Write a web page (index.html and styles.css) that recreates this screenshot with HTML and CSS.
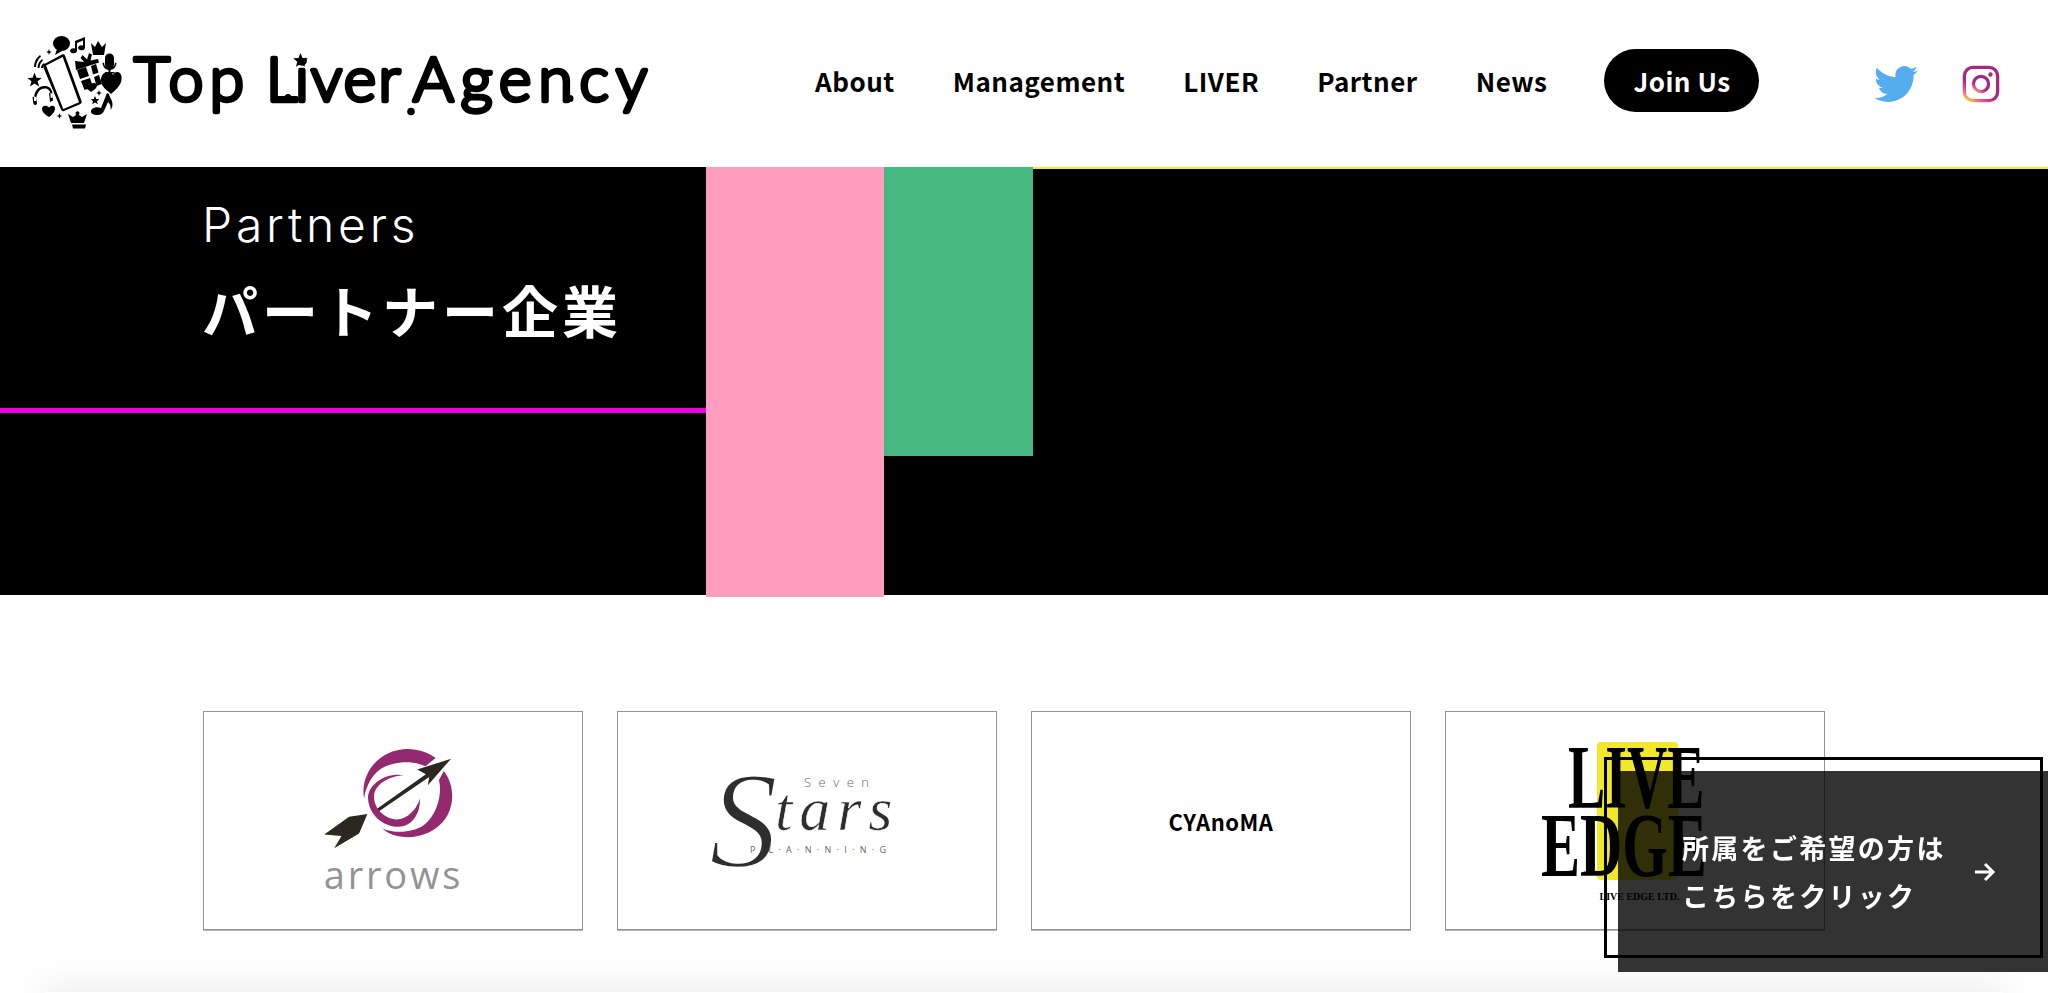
FILE: index.html
```html
<!DOCTYPE html>
<html lang="ja">
<head>
<meta charset="utf-8">
<title>Top Liver Agency - Partners</title>
<link rel="stylesheet" href="styles.css">
</head>
<body>
<header class="site-header">
  <a class="logo" href="#">
    <svg class="logo-mark" viewBox="0 0 110 110" aria-hidden="true">
      <g fill="#000">
        <ellipse cx="41.500" cy="18.500" rx="8.500" ry="7.500"/><path d="M37 24l-2 6 7-4z"/>
        <path d="M57 26a3.500 2.500 0 1 1-2-2.500V16l10-4v11a3.500 2.500 0 1 1-2-2.500v-5l-6 2.500z"/>
        <path d="M71 18l4 4 3-6 4 6 4-4-2 12H73z"/>
        <path d="M14 42c0-5 2-9 6-12l1 1.500c-3 3-5 6-5 10.500zM17.500 43c0-4 2-7 4.500-9l1 1.500c-2 2-3.500 4-3.500 7.500zM21 43c0-2 1-4 3-5l1 1.500c-1.500 1-2 2-2 3.500z"/>
        <path d="M29 24l.8 2.200 2.200.8-2.200.8-.8 2.200-.8-2.200-2.200-.8 2.200-.8z"/>
        <path d="M14.500 47.500l2 5.300 5.300.2-4.200 3.200 1.500 5.300-4.600-3.100-4.500 3.100 1.500-5.300-4.200-3.200 5.300-.2z"/>
        <path fill-rule="evenodd" d="M23.500 39.500L42 29.500c1.500-.7 2.500-.2 3 1L61.500 76c.5 1.500 0 2.500-1.500 3.200L44 86c-1.500.5-2.500 0-3-1.500L23 41.500c-.2-.8 0-1.500.5-2zM26 40.500L43.300 84 59 77.300 42.700 32z"/>
        <path d="M55 36l9 1-3.500-4 2-3 4.500 4.500 2-6.500 3 1.500-1.500 6 7.500-1.500 1 3.500-23 7.500zM57 45l9-3 3 9-9 3zM71 41l5-2 2.500 8.500-5.500 2zM61 56l9-3 3 9-8.500 3zM74 52l5-2 3 9-5.500 2z"/>
        <path d="M85 33a4.500 4.500 0 0 1 9 0v6a4.500 4.500 0 0 1-9 0zM82.500 38l1.500-.5a5.500 5.500 0 0 0 11 0l1.500.5a7 7 0 0 1-6 7v2h4v1.500h-9.500V47h3.500v-2a7 7 0 0 1-6-7z"/>
        <path d="M91 69c-4-4-10-7-10-14 0-5 3-8 7-8 3 0 4 1 5 3 1-2.500 3-3.500 5-3 3 1 4 4 3.500 8-1 6-6 10-10.500 14z"/>
        <path d="M71 67c-2-2-6-3.500-6-6.500 0-2.500 3.500-3.500 6-1 2-2.500 6-1.500 6 1 0 3-4 5-6 6.500z"/>
        <path d="M79 65l.8 2.200 2.200.8-2.200.8-.8 2.200-.8-2.200-2.200-.8 2.200-.8z"/>
        <path d="M75 71l1.300 3 3 .2-2.300 2 .8 3-2.800-1.700-2.800 1.700.8-3-2.300-2 3-.2z"/>
        <path fill-rule="evenodd" d="M14 76c-.7-10 5-16 12-15 5 .7 7 5 6.500 12l-2-.5c.5-5-1-8.500-5-9-5-.5-9.500 4-9.500 12.500zM12.500 72.500c1-1.500 3-1.500 3.500 0l1 6c0 1.500-2.500 2-3.500.5zM29 68l3.500.5.500 7-3 1.500z"/>
        <path d="M29 92c-3-2-7-4.500-7-8 0-3 4-4.500 7-1.500 2.500-3 6.500-1.500 6 1.500-.3 3.500-3 6-6 8z"/>
        <path d="M39.500 88l.7 2.300 2.300.7-2.300.7-.7 2.300-.7-2.300-2.300-.7 2.300-.7z"/>
        <path d="M51 98l-3-9 5 3 3-2-.5-2.500 2-1.500 2 1.500-.5 2.500 3 2 5-3-3 9zM52 99.500h14l-1 4H53z"/>
        <path d="M87 68l2 1c.5 3.500 3.500 6 3.500 10 0 2.500-.5 4-2 6 .5-3 0-6-2.500-8l-4 9c-1 2.500-4 4.500-8 4-3-.3-5.500-2-5-4 .5-3 5.500-5 10-3z"/>
      </g>
    </svg>
    <svg class="logo-word" viewBox="0 0 530 90" role="img" aria-label="Top Liver Agency">
      <text class="logo-text" y="61.500"><tspan x="4" textLength="110" lengthAdjust="spacing">Top</tspan> <tspan x="136">L</tspan><tspan x="165" textLength="104" lengthAdjust="spacing">iver</tspan> <tspan x="283" textLength="234" lengthAdjust="spacing">Agency</tspan></text>
      <circle class="logo-dot-cover" cx="170" cy="19" r="5.500"/>
      <path d="M170.500 14l2 4.900 5.300.4-4 3.400 1.200 5.100-4.500-2.800-4.500 2.800 1.200-5.100-4-3.400 5.300-.4z"/>
      <circle cx="158" cy="58.500" r="3.500"/>
      <circle cx="281" cy="72.500" r="3.800"/>
      <circle cx="440" cy="59.500" r="3.500"/>
    </svg>
  </a>
  <nav class="nav">
    <a href="#">About</a>
    <a href="#">Management</a>
    <a href="#">LIVER</a>
    <a href="#">Partner</a>
    <a href="#">News</a>
    <a class="join" href="#">Join Us</a>
  </nav>
  <div class="social">
    <svg class="twitter" viewBox="0 0 24 24" aria-hidden="true"><path fill="#55acee" d="M23.950 4.570a10 10 0 0 1-2.820.770 4.960 4.960 0 0 0 2.160-2.720c-.950.550-2 .960-3.130 1.180a4.920 4.920 0 0 0-8.380 4.480C7.690 8.100 4.070 6.130 1.640 3.160a4.820 4.820 0 0 0-.670 2.480c0 1.710.870 3.210 2.190 4.100a4.900 4.900 0 0 1-2.230-.620v.060a4.920 4.920 0 0 0 3.950 4.830 5 5 0 0 1-2.210.080 4.940 4.940 0 0 0 4.600 3.420A9.870 9.870 0 0 1 0 19.540a14 14 0 0 0 7.560 2.210c9.050 0 14-7.500 14-13.980 0-.210 0-.420-.020-.630a9.940 9.940 0 0 0 2.410-2.570z"/></svg>
    <svg class="insta" viewBox="0 0 40 40" aria-hidden="true">
      <defs><linearGradient id="ig" x1="0.1" y1="1" x2="0.35" y2="0.6"><stop offset="0" stop-color="#f5d52e"/><stop offset="0.45" stop-color="#e8559f"/><stop offset="1" stop-color="#a42a80"/></linearGradient></defs>
      <rect x="2.500" y="2.500" width="35" height="35" rx="9" fill="none" stroke="url(#ig)" stroke-width="3.500"/>
      <circle cx="20" cy="20" r="8" fill="none" stroke="url(#ig)" stroke-width="3.500"/>
      <circle cx="30" cy="10" r="2.300" fill="#a42a80"/>
    </svg>
  </div>
</header>

<section class="hero">
  <div class="hero-title">
    <p class="hero-en">Partners</p>
    <h1 class="hero-ja">パートナー企業</h1>
    <div class="hero-rule"></div>
  </div>
  <div class="block-pink"></div>
  <div class="block-green"></div>
  <div class="hero-rest"></div>
</section>

<section class="partners">
  <a class="card" href="#">
    <div class="arrows-logo">
      <svg class="arrows-mark" viewBox="400 150 390 310" aria-hidden="true">
        <path fill="#93296f" d="M735 183C700 155 640 145 590 170 540 195 510 250 520 305 525 270 545 225 585 208 625 192 670 192 705 208z"/>
        <path fill="#93296f" d="M760 222C790 260 795 320 765 365 735 410 670 430 620 418 600 413 585 405 575 395 610 410 665 410 700 385 745 350 755 280 745 250z"/>
        <path fill="#93296f" d="M640 235C590 225 530 260 532 305 534 355 580 392 625 390 665 388 690 350 688 305 680 335 650 370 615 368 580 365 550 335 550 300 550 265 590 238 640 235z"/>
        <path fill="#2a2820" d="M782 185L680 218 706 232 560 335 565 343 716 240 712 265z"/>
        <path fill="#2a2820" d="M530 352L475 360 400 413 452 418 430 455 505 410z"/>
      </svg>
      <span class="arrows-word">arrows</span>
    </div>
  </a>
  <a class="card" href="#">
    <div class="stars-logo">
      <span class="stars-seven">Seven</span>
      <span class="stars-word"><span class="stars-s">S</span>tars</span>
      <span class="stars-planning">P·L·A·N·N·I·N·G</span>
    </div>
  </a>
  <a class="card" href="#"><span class="cyanoma">CYAnoMA</span></a>
  <a class="card" href="#">
    <div class="edge-logo">
      <span class="edge-live">LIVE</span>
      <span class="edge-edge">EDGE</span>
      <span class="edge-ltd">LIVE EDGE LTD.</span>
    </div>
  </a>
</section>

<div class="next-section"></div>

<a class="cta" href="#">
  <span class="cta-text">所属をご希望の方は<br>こちらをクリック</span>
  <svg class="cta-arrow" viewBox="0 0 22 20" aria-hidden="true"><path d="M1 10h18M11 2l8 8-8 8" fill="none" stroke="#fff" stroke-width="3"/></svg>
</a>
</body>
</html>
```
FILE: styles.css
```css
* { box-sizing: border-box; }
html, body { margin: 0; padding: 0; }
body {
  background: #fff;
  color: #000;
  font-family: "Noto Sans CJK JP", "Noto Sans", sans-serif;
  overflow: hidden;
  height: 993px;
}
a { color: inherit; text-decoration: none; }

.site-header {
  height: 167px;
  display: flex;
  align-items: center;
}
.logo {
  display: flex;
  align-items: center;
  margin-left: 20px;
  width: 640px;
  flex: none;
}
.logo-mark { width: 110px; height: 110px; flex: none; margin-top: -7px; }
.logo-word { width: 530px; height: 90px; flex: none; overflow: visible; }
.logo-text {
  font-family: "Lato", sans-serif;
  font-weight: 300;
  font-size: 62px;
  stroke: #000;
  stroke-width: 4.500px;
  stroke-linejoin: round;
  stroke-linecap: round;
}
.logo-dot-cover { fill: #fff; }

.nav {
  display: flex;
  align-items: center;
  gap: 58px;
  margin-left: 155px;
  margin-bottom: 6px;
  font-size: 26px;
  font-weight: 700;
  letter-spacing: 0.5px;
}
.join {
  background: #000;
  color: #fff;
  height: 63px;
  width: 155px;
  border-radius: 32px;
  display: flex;
  align-items: center;
  justify-content: center;
  margin-left: -1px;
}
.social {
  display: flex;
  align-items: center;
  gap: 44px;
  margin-left: 115px;
}
.twitter { width: 44px; height: 44px; }
.insta { width: 38px; height: 38px; }

.hero {
  height: 428px;
  background: #000;
  display: grid;
  grid-template-columns: 706px 178px 149px 1fr;
}
.hero-title { padding: 30px 0 0 202px; color: #fff; }
.hero-en {
  margin: 0;
  font-family: "Inter", sans-serif;
  font-size: 48px;
  font-weight: 300;
  line-height: 56px;
  letter-spacing: 3.800px;
}
.hero-ja {
  margin: 21px 0 0;
  font-size: 56px;
  line-height: 70px;
  font-weight: 700;
  letter-spacing: 4px;
  white-space: nowrap;
}
.hero-rule {
  height: 5px;
  background: #f000e0;
  margin: 64px 0 0 -202px;
}
.block-pink { background: #ff9dbf; height: 430px; }
.block-green { background: #46b881; height: 289px; }
.hero-rest { border-top: 2px solid #f2ee2c; }

.partners {
  display: grid;
  grid-template-columns: repeat(4, 380px);
  gap: 34px;
  padding: 116px 0 0 203px;
}
.card {
  height: 219px;
  border: 1px solid #949494;
  box-shadow: 0 1px 0 #b5b5b5;
  display: flex;
  align-items: center;
  justify-content: center;
  background: #fff;
}

.arrows-logo { display: flex; flex-direction: column; align-items: center; margin-left: 1px; margin-top: -1px; }
.arrows-mark { width: 130px; height: 103px; margin-left: -10px; }
.arrows-word {
  font-family: "Open Sans", sans-serif;
  font-weight: 400;
  font-size: 38px;
  line-height: 38px;
  letter-spacing: 2.800px;
  color: #939393;
  margin-top: 5px;
}

.stars-logo {
  position: relative;
  width: 184px;
  height: 96px;
  margin-top: -4px;
  color: #2e2e2e;
}
.stars-seven {
  position: absolute;
  left: 89px;
  top: 2px;
  font-family: "Open Sans", sans-serif;
  font-weight: 300;
  font-size: 13px;
  letter-spacing: 7.500px;
  color: #666;
}
.stars-word {
  position: absolute;
  left: -6px;
  top: -6px;
  display: flex;
  align-items: flex-start;
  font-family: "Liberation Serif", serif;
  font-style: italic;
  font-size: 62px;
  line-height: 80px;
  letter-spacing: 7px;
  padding-top: 4px;
  -webkit-text-stroke: 0.6px #fff;
}
.stars-s {
  font-size: 138px;
  line-height: 92px;
  margin: 6px -10px 0 0;
  font-weight: 400;
  -webkit-text-stroke: 2.500px #fff;
}
.stars-planning {
  position: absolute;
  left: 35px;
  top: 73px;
  font-family: "Open Sans", sans-serif;
  font-size: 9px;
  line-height: 12px;
  letter-spacing: 5.300px;
  color: #666;
  white-space: nowrap;
}

.cyanoma { font-size: 22px; font-weight: 700; letter-spacing: 0.5px; }

.edge-logo {
  position: relative;
  width: 81px;
  height: 138px;
  background: #f2e82a;
  border-radius: 4px;
  margin: -20px 0 0 4px;
}
.edge-live, .edge-edge {
  position: absolute;
  font-family: "Liberation Serif", serif;
  font-weight: 700;
  font-size: 90px;
  line-height: 90px;
  color: #000;
  white-space: nowrap;
  transform-origin: left top;
}
.edge-live { left: -29px; top: -9px; transform: scaleX(.62); }
.edge-edge { left: -56px; top: 59px; transform: scaleX(.65); }
.edge-ltd {
  position: absolute;
  left: 3px;
  top: 150px;
  font-family: "Liberation Serif", serif;
  font-weight: 700;
  font-size: 10px;
  line-height: 10px;
  white-space: nowrap;
}

.next-section {
  height: 60px;
  margin: 62px 45px 0;
  background: #fff;
  box-shadow: 0 0 45px rgba(0,0,0,.1);
}

.cta {
  position: fixed;
  left: 1618px;
  top: 771px;
  width: 430px;
  height: 201px;
  background: rgba(0,0,0,.8);
  color: #fff;
  display: flex;
  align-items: center;
  padding-left: 64px;
  gap: 29px;
}
.cta::before {
  content: "";
  box-sizing: border-box;
  position: absolute;
  left: -14px;
  top: -14px;
  width: 439px;
  height: 201px;
  border: 3px solid #000;
}
.cta-text {
  width: 263px;
  font-size: 27px;
  font-weight: 700;
  line-height: 48px;
  letter-spacing: 2.300px;
  white-space: nowrap;
}
.cta-arrow { width: 22px; height: 20px; flex: none; }
```
